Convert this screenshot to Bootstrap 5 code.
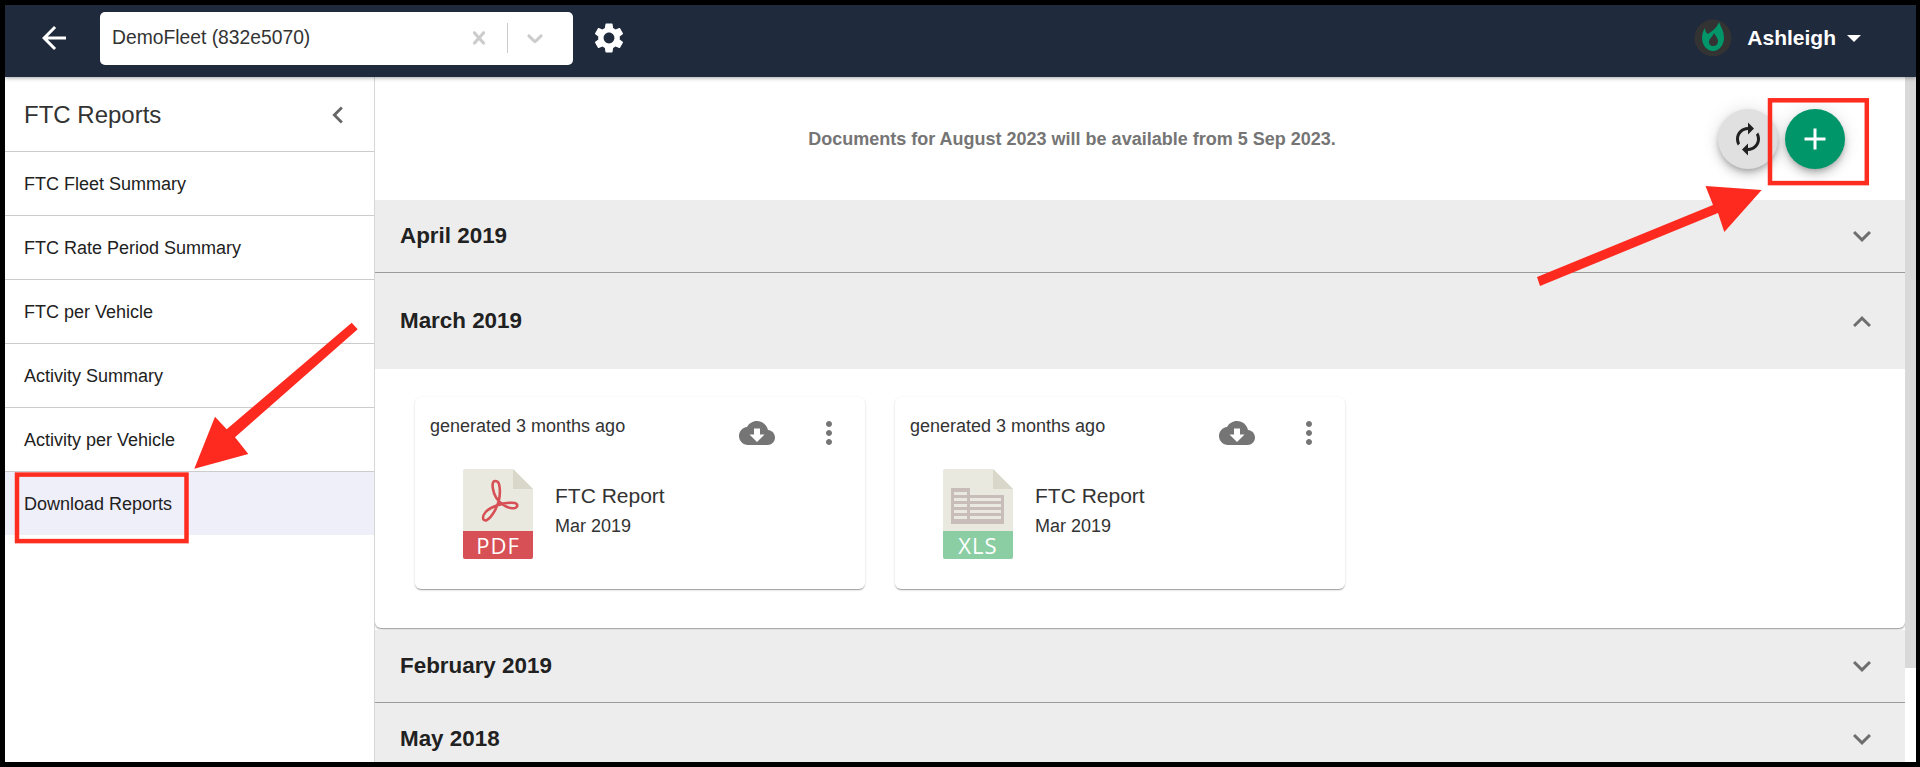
<!DOCTYPE html>
<html lang="en">
<head>
<meta charset="utf-8">
<title>FTC Reports</title>
<link href="https://cdn.jsdelivr.net/npm/bootstrap@5.3.0/dist/css/bootstrap.min.css" rel="stylesheet">
<style>
html,body{height:100%;margin:0}
body{background:#000;padding:5px 4px 5px 5px;overflow:hidden;font-family:"Liberation Sans",Arial,sans-serif;color:#212121}
.app-frame{height:757px;background:#fff;position:relative;overflow:hidden}
.top-bar{height:72px;background:#1f2a3c;padding:0 0 6px 0;flex-wrap:nowrap;box-shadow:0 1px 4px rgba(0,0,0,.35);position:relative;z-index:3}
.back-btn{width:36px;height:36px;margin-left:31px;margin-right:28px;color:#fff;padding:0;border:0;background:none}
.fleet-select{width:473px;height:53px;background:#fff;border-radius:5px;padding-left:12px;font-size:19.3px;color:#333}
.sel-x{width:26px;height:26px;fill:#ccc;margin-right:7px}
.sel-div{width:1px;height:30px;background:#ccc;margin:0 14px 0 8px}
.sel-c{width:26px;height:26px;fill:#ccc;margin-right:25px}
.gear{width:36px;height:36px;margin-left:18px;fill:#fff}
.user-area{margin-left:auto;margin-right:55px}
.user-name{color:#fff;font-weight:700;font-size:21px;padding:0;border:0;background:none;margin-left:15px}
.user-name.dropdown-toggle::after{border-top:7px solid #fff;border-left:7px solid transparent;border-right:7px solid transparent;border-bottom:0;margin-left:11px;vertical-align:3px}
.content-row{height:685px}
.side-col{width:370px;flex:none;border-right:1px solid #d6d6d6;background:#fff;height:100%}
.side-head{height:75px;border-bottom:1px solid #ccc;padding:2px 20px 0 19px;font-size:24px;color:#333}
.side-head svg{width:34px;height:34px;fill:#666;margin-right:-1px}
.side-list .list-group-item{height:64px;padding:2px 19px 0;display:flex;align-items:center;font-size:18px;color:#212121;border-color:#ccc;border-width:0 0 1px 0;background:#fff}
.side-list .list-group-item.active{background:#efeffa;color:#212121;border-color:#ccc}
.main-col{flex:1 1 0;min-width:0;height:100%;overflow:hidden}
.notice-row{height:123px;background:#fff}
.notice-text{flex:1 1 0;padding:2px 0 0 51px;text-align:center;font-weight:700;font-size:18px;color:#757575}
.fab-group{gap:7px;margin-right:60px}
.fab{width:60px;height:60px;padding:0;border:0;border-radius:50%;box-shadow:0 3px 5px -1px rgba(0,0,0,.2),0 6px 10px 0 rgba(0,0,0,.14),0 1px 18px 0 rgba(0,0,0,.12)}
.fab-grey{background:#e0e0e0}
.fab-green{background:#009669}
.fab-grey:hover{background:#e0e0e0}
.fab-green:hover{background:#009669}
.fab svg{width:36px;height:36px}
.report-acc{--bs-accordion-border-width:0;--bs-accordion-border-radius:0;--bs-accordion-inner-border-radius:0}
.report-acc .accordion-item{background:#fff;border:0;border-radius:0}
.report-acc .accordion-button{background:#ededed;color:#212121;font-weight:700;font-size:22.4px;padding:0 25px;height:73px;box-shadow:none;border-radius:0;justify-content:space-between;border-bottom:1px solid #9c9c9c}
.report-acc .accordion-button::after{display:none}
.report-acc .accordion-button svg{width:36px;height:36px;fill:#6e6e6e}
.report-acc .accordion-button.head-flat{border-bottom:0;height:96px;padding-top:1px}
.panel-open{height:259px;padding:28px 40px;display:flex;gap:30px;border-radius:0 0 6px 6px;box-shadow:0 1px 2px rgba(0,0,0,.45);margin-bottom:2px;background:#fff}
.doc-card{width:450px;height:192px;border:0;border-radius:6px;box-shadow:0 2px 1px -1px rgba(0,0,0,.2),0 1px 1px 0 rgba(0,0,0,.14),0 1px 3px 0 rgba(0,0,0,.12);padding:0;flex:none}
.doc-top{height:72px;padding:16px 18px 0 15px;font-size:18px;color:#333;line-height:26px}
.doc-acts{margin-left:auto;margin-top:2px}
.doc-acts svg{fill:#757575;width:36px;height:36px;display:block}
.cloud-ico{margin-right:36px}
.doc-body{padding-left:48px;gap:22px}
.doc-file{width:70px;height:90px;flex:none;display:block}
.doc-title{font-size:21px;color:#333;line-height:24px}
.doc-date{font-size:18px;color:#333;line-height:20px;margin-top:8px}
.doc-text{padding-bottom:9px}
.file-label{font-family:"Open Sans",sans-serif;font-size:22px;font-weight:500;fill:#fff;letter-spacing:1px}
.fake-track{width:11px;flex:none;height:100%;background:#fff}
.fake-thumb{height:591px;background:#d9d9d9}
.mark-layer{position:absolute;left:-5px;top:-5px;width:1920px;height:767px;pointer-events:none;z-index:5}
</style>
</head>
<body>
<div class="app-frame d-flex flex-column">
  <nav class="navbar top-bar d-flex align-items-center">
    <button class="back-btn d-flex" type="button" aria-label="Back">
      <svg viewBox="0 0 24 24" width="36" height="36" fill="#fff"><path d="M20 11H7.83l5.59-5.59L12 4l-8 8 8 8 1.41-1.41L7.83 13H20v-2z"/></svg>
    </button>
    <div class="fleet-select d-flex align-items-center">
      <span class="flex-grow-1">DemoFleet (832e5070)</span>
      <svg class="sel-x" viewBox="0 0 20 20"><path d="M14.348 14.849c-0.469 0.469-1.229 0.469-1.697 0l-2.651-3.030-2.651 3.029c-0.469 0.469-1.229 0.469-1.697 0-0.469-0.469-0.469-1.229 0-1.697l2.758-3.15-2.759-3.152c-0.469-0.469-0.469-1.228 0-1.697s1.228-0.469 1.697 0l2.652 3.031 2.651-3.031c0.469-0.469 1.228-0.469 1.697 0s0.469 1.229 0 1.697l-2.758 3.152 2.758 3.15c0.469 0.469 0.469 1.229 0 1.698z"/></svg>
      <span class="sel-div"></span>
      <svg class="sel-c" viewBox="0 0 20 20"><path d="M4.516 7.548c0.436-0.446 1.043-0.481 1.576 0l3.908 3.747 3.908-3.747c0.533-0.481 1.141-0.446 1.576 0 0.436 0.445 0.408 1.197 0 1.615-0.406 0.418-4.695 4.502-4.695 4.502-0.217 0.223-0.502 0.335-0.789 0.335s-0.572-0.112-0.791-0.335c0 0-4.287-4.084-4.695-4.502s-0.436-1.17 0-1.615z"/></svg>
    </div>
    <svg class="gear" viewBox="0 0 24 24"><path d="M19.14 12.94c.04-.3.06-.61.06-.94 0-.32-.02-.64-.07-.94l2.03-1.58c.18-.14.23-.41.12-.61l-1.92-3.32c-.12-.22-.37-.29-.59-.22l-2.39.96c-.5-.38-1.03-.7-1.62-.94l-.36-2.54c-.04-.24-.24-.41-.48-.41h-3.84c-.24 0-.43.17-.47.41l-.36 2.54c-.59.24-1.13.57-1.62.94l-2.39-.96c-.22-.08-.47 0-.59.22L2.74 8.87c-.12.21-.08.47.12.61l2.03 1.58c-.05.3-.09.63-.09.94s.02.64.07.94l-2.03 1.58c-.18.14-.23.41-.12.61l1.92 3.32c.12.22.37.29.59.22l2.39-.96c.5.38 1.03.7 1.62.94l.36 2.54c.05.24.24.41.48.41h3.84c.24 0 .44-.17.47-.41l.36-2.54c.59-.24 1.13-.56 1.62-.94l2.39.96c.22.08.47 0 .59-.22l1.92-3.32c.12-.22.07-.47-.12-.61l-2.01-1.58zM12 15.6c-1.98 0-3.6-1.62-3.6-3.6s1.62-3.6 3.6-3.6 3.6 1.62 3.6 3.6-1.62 3.6-3.6 3.6z"/></svg>
    <div class="user-area d-flex align-items-center">
      <svg width="38" height="38" viewBox="0 0 38 38"><circle cx="19" cy="19" r="18.500" fill="#333"/><path d="M25 3c1 4 5 8 5 16 0 7-5 13-11 13S8 26 8 19c0-4 1-7 3-10 0 3 1 5 3 6 4-3 9-6 11-12z" fill="#009669"/><path d="M20 14c1 2 4 5 4 8 0 3-2 5-5 5s-4-2-4-4c0-4 4-5 5-9z" fill="#333"/></svg>
      <button class="user-name dropdown-toggle" type="button">Ashleigh</button>
    </div>
  </nav>
  <div class="content-row d-flex">
    <aside class="side-col">
      <div class="side-head d-flex align-items-center justify-content-between">
        <span>FTC Reports</span>
        <svg viewBox="0 0 24 24"><path d="M15.41 7.41L14 6l-6 6 6 6 1.41-1.41L10.83 12z"/></svg>
      </div>
      <div class="list-group list-group-flush side-list">
        <a class="list-group-item" href="#">FTC Fleet Summary</a>
        <a class="list-group-item" href="#">FTC Rate Period Summary</a>
        <a class="list-group-item" href="#">FTC per Vehicle</a>
        <a class="list-group-item" href="#">Activity Summary</a>
        <a class="list-group-item" href="#">Activity per Vehicle</a>
        <a class="list-group-item active" href="#">Download Reports</a>
      </div>
    </aside>
    <main class="main-col">
      <div class="notice-row d-flex align-items-center">
        <div class="notice-text">Documents for August 2023 will be available from 5 Sep 2023.</div>
        <div class="fab-group d-flex">
          <button class="btn fab fab-grey d-flex align-items-center justify-content-center" type="button" aria-label="Refresh">
            <svg viewBox="0 0 24 24" fill="#212121"><path d="M12 4V1L8 5l4 4V6c3.31 0 6 2.69 6 6 0 1.01-.25 1.97-.7 2.8l1.46 1.46C19.54 15.03 20 13.57 20 12c0-4.42-3.58-8-8-8zm0 14c-3.31 0-6-2.69-6-6 0-1.01.25-1.97.7-2.8L5.24 7.74C4.46 8.97 4 10.43 4 12c0 4.42 3.58 8 8 8v3l4-4-4-4v3z" transform="matrix(-1 0 0 1 24 0)"/></svg>
          </button>
          <button class="btn fab fab-green d-flex align-items-center justify-content-center" type="button" aria-label="Add">
            <svg viewBox="0 0 24 24" fill="#fff"><path d="M19 13h-6v6h-2v-6H5v-2h6V5h2v6h6v2z"/></svg>
          </button>
        </div>
      </div>
      <div class="accordion report-acc">
        <div class="accordion-item">
          <h2 class="accordion-header"><button class="accordion-button collapsed" type="button">April 2019<svg viewBox="0 0 24 24"><path d="M16.59 8.59L12 13.17 7.41 8.59 6 10l6 6 6-6z"/></svg></button></h2>
        </div>
        <div class="accordion-item">
          <h2 class="accordion-header"><button class="accordion-button head-flat" type="button">March 2019<svg viewBox="0 0 24 24"><path d="M12 8l-6 6 1.41 1.41L12 10.83l4.59 4.58L18 14z"/></svg></button></h2>
          <div class="panel-open">
            <div class="card doc-card">
              <div class="doc-top d-flex align-items-start">
                <span>generated 3 months ago</span>
                <div class="doc-acts d-flex">
                  <svg class="cloud-ico" viewBox="0 0 24 24"><path d="M19.35 10.04C18.67 6.59 15.64 4 12 4 9.11 4 6.6 5.64 5.35 8.04 2.34 8.36 0 10.91 0 14c0 3.31 2.69 6 6 6h13c2.76 0 5-2.24 5-5 0-2.64-2.05-4.78-4.65-4.96zM17 13l-5 5-5-5h3V9h4v4h3z"/></svg>
                  <svg viewBox="0 0 24 24"><path d="M12 8c1.1 0 2-.9 2-2s-.9-2-2-2-2 .9-2 2 .9 2 2 2zm0 2c-1.1 0-2 .9-2 2s.9 2 2 2 2-.9 2-2-.9-2-2-2zm0 6c-1.1 0-2 .9-2 2s.9 2 2 2 2-.9 2-2-.9-2-2-2z"/></svg>
                </div>
              </div>
              <div class="doc-body d-flex align-items-center">
                <svg class="doc-file" viewBox="0 0 70 90">
                  <path d="M2 0h48l20 20v68a2 2 0 0 1-2 2H2a2 2 0 0 1-2-2V2a2 2 0 0 1 2-2z" fill="#e9e9e0"/>
                  <path d="M50 0l20 20H50z" fill="#d9d7ca"/>
                  <path d="M0 62h70v26a2 2 0 0 1-2 2H2a2 2 0 0 1-2-2z" fill="#d75055"/>
                  <path d="M32 12c-2 0-3 3-2 8 1 6 5 12 9 15 4 3 9 5 13 4 3-1 3-4 0-5-6-1-17 1-24 5-4 2-8 6-8 10 0 2 2 3 4 2 5-3 10-12 12-20 1-5 1-12 0-16-.5-2-2-3-4-3z" fill="none" stroke="#d75055" stroke-width="2.600"/>
                  <text class="file-label" x="35" y="85" text-anchor="middle">PDF</text>
                </svg>
                <div class="doc-text">
                  <div class="doc-title">FTC Report</div>
                  <div class="doc-date">Mar 2019</div>
                </div>
              </div>
            </div>
            <div class="card doc-card">
              <div class="doc-top d-flex align-items-start">
                <span>generated 3 months ago</span>
                <div class="doc-acts d-flex">
                  <svg class="cloud-ico" viewBox="0 0 24 24"><path d="M19.35 10.04C18.67 6.59 15.64 4 12 4 9.11 4 6.6 5.64 5.35 8.04 2.34 8.36 0 10.91 0 14c0 3.31 2.69 6 6 6h13c2.76 0 5-2.24 5-5 0-2.64-2.05-4.78-4.65-4.96zM17 13l-5 5-5-5h3V9h4v4h3z"/></svg>
                  <svg viewBox="0 0 24 24"><path d="M12 8c1.1 0 2-.9 2-2s-.9-2-2-2-2 .9-2 2 .9 2 2 2zm0 2c-1.1 0-2 .9-2 2s.9 2 2 2 2-.9 2-2-.9-2-2-2zm0 6c-1.1 0-2 .9-2 2s.9 2 2 2 2-.9 2-2-.9-2-2-2z"/></svg>
                </div>
              </div>
              <div class="doc-body d-flex align-items-center">
                <svg class="doc-file" viewBox="0 0 70 90">
                  <path d="M2 0h48l20 20v68a2 2 0 0 1-2 2H2a2 2 0 0 1-2-2V2a2 2 0 0 1 2-2z" fill="#e9e9e0"/>
                  <path d="M50 0l20 20H50z" fill="#d9d7ca"/>
                  <path d="M8 19h19v7h34v29H8z" fill="#c8bdb8"/>
                  <path d="M11 23h13v3H11zM11 29h13v3H11zM11 35h13v3H11zM11 41h13v3H11zM11 47h13v3H11zM27 29h31v3H27zM27 35h31v3H27zM27 41h31v3H27zM27 47h31v3H27z" fill="#e9e9e0"/>
                  <path d="M0 62h70v26a2 2 0 0 1-2 2H2a2 2 0 0 1-2-2z" fill="#8bcea3"/>
                  <text class="file-label" x="35" y="85" text-anchor="middle">XLS</text>
                </svg>
                <div class="doc-text">
                  <div class="doc-title">FTC Report</div>
                  <div class="doc-date">Mar 2019</div>
                </div>
              </div>
            </div>
          </div>
        </div>
        <div class="accordion-item">
          <h2 class="accordion-header"><button class="accordion-button collapsed" type="button">February 2019<svg viewBox="0 0 24 24"><path d="M16.59 8.59L12 13.17 7.41 8.59 6 10l6 6 6-6z"/></svg></button></h2>
        </div>
        <div class="accordion-item">
          <h2 class="accordion-header"><button class="accordion-button collapsed" type="button">May 2018<svg viewBox="0 0 24 24"><path d="M16.59 8.59L12 13.17 7.41 8.59 6 10l6 6 6-6z"/></svg></button></h2>
        </div>
      </div>
    </main>
    <div class="fake-track"><div class="fake-thumb"></div></div>
  </div>
  <svg class="mark-layer" viewBox="0 0 1920 767">
    <rect x="1770" y="100.300" width="96.800" height="82.800" fill="none" stroke="#ff2d20" stroke-width="4.500"/>
    <rect x="17" y="474.600" width="169.500" height="66.500" fill="none" stroke="#ff2d20" stroke-width="4.500"/>
    <polygon fill="#ff2a1f" points="1537,277 1540,286 1718,213 1724.300,232 1761.700,190 1705.500,186 1713,205"/>
    <polygon fill="#ff2a1f" points="351.700,322.700 357.700,329.300 235,437.300 248.300,454 194.300,468.700 215,416.700 226.700,429.300"/>
  </svg>
</div>
<script src="https://cdn.jsdelivr.net/npm/bootstrap@5.3.0/dist/js/bootstrap.bundle.min.js"></script>
</body>
</html>
